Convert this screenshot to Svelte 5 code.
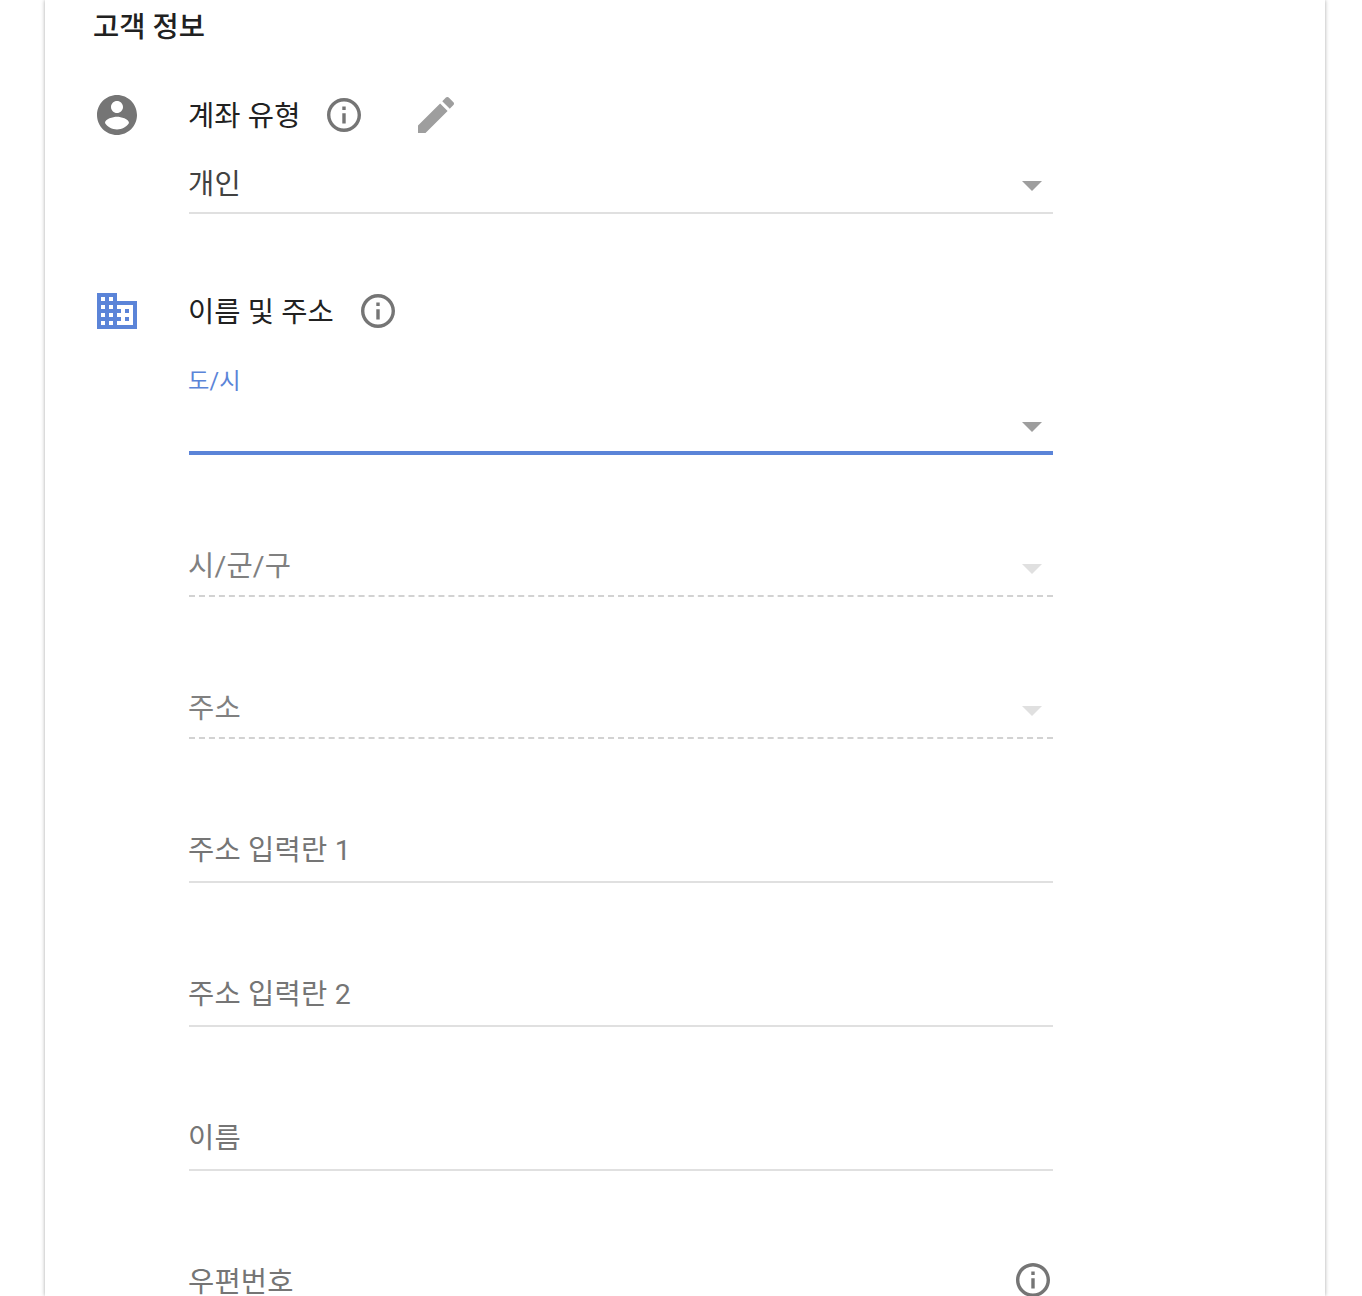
<script lang="ts">
  const lockedFields = ['시/군/구', '주소'];
  const textFields = ['주소 입력란 1', '주소 입력란 2', '이름'];
</script>

{#snippet info()}
  <svg class="info" viewBox="2 2 20 20" width="34" height="34" aria-hidden="true">
    <path fill="#757575" d="M11 7h2v2h-2zm0 4h2v6h-2zm1-9C6.480 2 2 6.480 2 12s4.480 10 10 10 10-4.480 10-10S17.520 2 12 2zm0 18c-4.410 0-8-3.590-8-8s3.590-8 8-8 8 3.590 8 8-3.590 8-8 8z" />
  </svg>
{/snippet}

{#snippet caret()}
  <svg class="caret" viewBox="0 0 20 10" width="20" height="10" aria-hidden="true">
    <path d="M0 0h20L10 10z" />
  </svg>
{/snippet}

<div class="page">
  <main class="card">
    <h2 class="title">고객 정보</h2>

    <section class="row account">
      <svg class="side" viewBox="2 2 20 20" width="40" height="40" aria-hidden="true">
        <path fill="#757575" d="M12 2C6.480 2 2 6.480 2 12s4.480 10 10 10 10-4.480 10-10S17.520 2 12 2zm0 3c1.660 0 3 1.340 3 3s-1.340 3-3 3-3-1.340-3-3 1.340-3 3-3zm0 14.200c-2.500 0-4.710-1.280-6-3.220.030-1.990 4-3.080 6-3.080 1.990 0 5.970 1.090 6 3.080-1.290 1.940-3.500 3.220-6 3.220z" />
      </svg>
      <div class="body">
        <div class="heading">
          <span>계좌 유형</span>
          {@render info()}
          <svg class="pencil" viewBox="3 3 18 18" width="36" height="36" aria-hidden="true">
            <path fill="#9e9e9e" d="M3 17.250V21h3.750L17.810 9.940l-3.750-3.750L3 17.250zM20.710 7.040c.390-.390.390-1.020 0-1.410l-2.340-2.340c-.390-.390-1.020-.390-1.410 0l-1.830 1.830 3.750 3.750 1.830-1.830z" />
          </svg>
        </div>
        <div class="field select value">
          <span>개인</span>
          {@render caret()}
        </div>
      </div>
    </section>

    <section class="row address">
      <svg class="side" viewBox="2 3 20 18" width="40" height="36" aria-hidden="true">
        <path fill="#5b84d8" d="M12 7V3H2v18h20V7H12zM6 19H4v-2h2v2zm0-4H4v-2h2v2zm0-4H4V9h2v2zm0-4H4V5h2v2zm4 12H8v-2h2v2zm0-4H8v-2h2v2zm0-4H8V9h2v2zm0-4H8V5h2v2zm10 12h-8v-2h2v-2h-2v-2h2v-2h-2V9h8v10zm-2-8h-2v2h2v-2zm0 4h-2v2h2v-2z" />
      </svg>
      <div class="body">
        <div class="heading">
          <span>이름 및 주소</span>
          {@render info()}
        </div>
        <div class="field select focused">
          <label for="city">도/시</label>
          <span id="city"></span>
          {@render caret()}
        </div>
        {#each lockedFields as label}
          <div class="field select locked">
            <span>{label}</span>
            {@render caret()}
          </div>
        {/each}
        {#each textFields as label}
          <div class="field text"><span>{label}</span></div>
        {/each}
        <div class="field zip">
          <span>우편번호</span>
          {@render info()}
        </div>
      </div>
    </section>
  </main>
</div>

<style>
  :global(body) {
    background: #fff;
    font-family: Roboto, "Noto Sans CJK KR", sans-serif;
  }

  .page {
    height: 1296px;
    overflow: hidden;
    padding-left: 45px;
  }

  .card {
    width: 1280px;
    height: 1296px;
    box-sizing: border-box;
    padding: 0 48px;
    background: #fff;
    box-shadow: 0 0 4px rgba(0, 0, 0, 0.35);
  }

  .title {
    margin: 0;
    padding-top: 8px;
    height: 40px;
    font-size: 28.5px;
    line-height: 40px;
    font-weight: 500;
    color: #212121;
  }

  .row {
    display: flex;
    align-items: flex-start;
  }

  .account {
    margin-top: 47px;
  }

  .address {
    margin-top: 77px;
  }

  .side {
    flex: none;
    width: 40px;
    margin: 0 52px 0 4px;
  }

  .address .side {
    margin-top: 2px;
  }

  .body {
    width: 864px;
  }

  .heading {
    display: flex;
    align-items: center;
    height: 40px;
    font-size: 28.5px;
    letter-spacing: 0.1px;
    color: #212121;
  }

  .heading span {
    margin: 0 0 4px -1px;
  }

  .info {
    flex: none;
    margin-left: 27px;
  }

  .pencil {
    margin-left: 57px;
  }

  .field {
    display: flex;
    align-items: flex-end;
    justify-content: space-between;
    box-sizing: border-box;
    height: 144px;
    padding-bottom: 8px;
    font-size: 28.5px;
    line-height: 40px;
    letter-spacing: 0.2px;
    color: #757575;
    border-bottom: 2px solid #e0e0e0;
  }

  .field > span {
    margin-left: -1px;
  }

  .text {
    padding-bottom: 10px;
  }

  .value {
    height: 79px;
    padding-bottom: 7px;
    color: #424242;
  }

  .value .caret {
    margin-bottom: 14px;
  }

  .focused {
    position: relative;
    height: 124px;
    border-bottom: 4px solid #5b84d8;
  }

  .focused .caret {
    margin-bottom: 11px;
  }

  .focused label {
    position: absolute;
    left: -1px;
    top: 33px;
    font-size: 23.2px;
    line-height: 34px;
    color: #5b84d8;
  }

  .locked {
    height: 142px;
    color: #808080;
    border-bottom: 2px dashed #d2d2d2;
  }

  .zip {
    padding-bottom: 12px;
    border-bottom: none;
  }

  .zip .info {
    margin: 0 3px 6px 0;
  }

  .caret {
    flex: none;
    margin: 0 11px 13px 0;
    fill: #9e9e9e;
  }

  .locked .caret {
    fill: #e0e0e0;
  }
</style>
